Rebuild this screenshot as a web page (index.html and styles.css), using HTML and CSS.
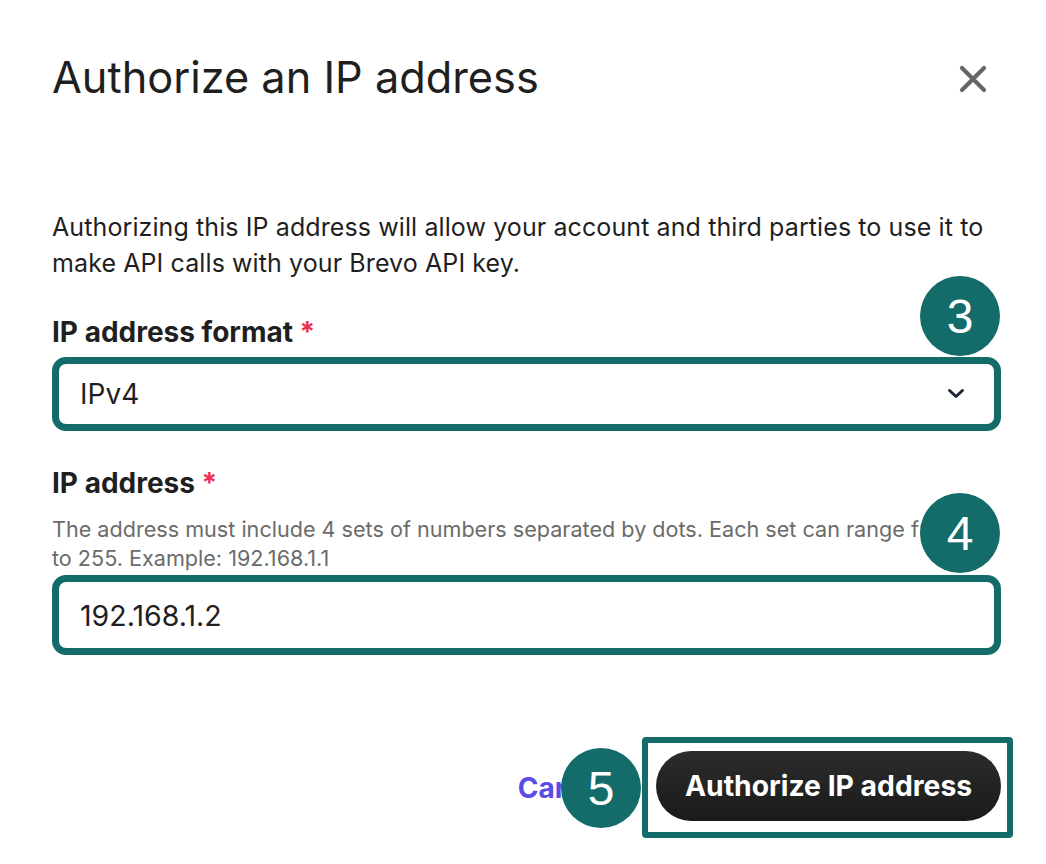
FILE: index.html
```html
<!DOCTYPE html>
<html lang="en">
<head>
<meta charset="utf-8">
<title>Authorize an IP address</title>
<link rel="stylesheet" href="styles.css">
</head>
<body>
<div class="dialog">
  <header class="head">
    <h1 class="title">Authorize an IP address</h1>
    <button class="close" aria-label="Close">
      <svg width="28" height="28" viewBox="0 0 28 28"><path d="M3 3L25 25M25 3L3 25" stroke="#666666" stroke-width="4.2" stroke-linecap="round" fill="none"/></svg>
    </button>
  </header>
  <p class="desc">Authorizing this IP address will allow your account and third parties to use it to make API calls with your Brevo API key.</p>
  <div class="field first">
    <label class="label">IP address format <span class="req">*</span></label>
    <div class="select">
      <span>IPv4</span>
      <svg width="18" height="12" viewBox="0 0 18 12"><path d="M2.5 2.5L9 8.5L15.5 2.5" stroke="#1e2633" stroke-width="3" stroke-linecap="round" stroke-linejoin="round" fill="none"/></svg>
    </div>
  </div>
  <div class="field second">
    <label class="label">IP address <span class="req">*</span></label>
    <p class="help">The address must include 4 sets of numbers separated by dots. Each set can range from 0 to 255. Example: 192.168.1.1</p>
    <div class="input">192.168.1.2</div>
  </div>
  <footer class="foot">
    <a class="cancel">Cancel</a>
    <div class="hl">
      <button class="primary">Authorize IP address</button>
    </div>
  </footer>
  <span class="badge b3">3</span>
  <span class="badge b4">4</span>
  <span class="badge b5">5</span>
</div>
</body>
</html>
```
FILE: styles.css
```css
html, body {
  margin: 0;
  background: #ffffff;
}
body {
  font-family: Inter, "Noto Sans", sans-serif;
  color: #1f1f1f;
}
.dialog {
  position: relative;
  padding: 50px 45px 0 52px;
  height: 864px;
  box-sizing: border-box;
}
.head {
  display: flex;
  justify-content: space-between;
  align-items: center;
  height: 54px;
}
.title {
  margin: 0;
  font-size: 43.3px;
  line-height: 54px;
  font-weight: 400;
  color: #1f1f1f;
}
.close {
  border: 0;
  background: none;
  padding: 0;
  width: 28px;
  height: 28px;
  margin: 4px 14px 0 0;
  display: flex;
}
.desc {
  margin: 105px 0 0;
  font-size: 25px;
  line-height: 36px;
  letter-spacing: 0.1px;
  color: #1f1f1f;
}
.label {
  display: block;
  font-size: 28px;
  line-height: 36px;
  font-weight: 700;
  color: #1f1f1f;
}
.req {
  color: #ee2f4f;
}
.field.first { margin-top: 33px; }
.field.second { margin-top: 34px; }
.select {
  margin-top: 7px;
  height: 74px;
  box-sizing: border-box;
  border: 7px solid #146c6a;
  border-radius: 14px;
  display: flex;
  align-items: center;
  justify-content: space-between;
  padding: 0 29px 0 21px;
  font-size: 28px;
}
.help {
  margin: 14px 0 0;
  font-size: 21.6px;
  line-height: 29px;
  color: #6b6b6b;
}
.input {
  margin-top: 2px;
  height: 80px;
  box-sizing: border-box;
  border: 7px solid #146c6a;
  border-radius: 14px;
  display: flex;
  align-items: center;
  padding: 0 21px;
  font-size: 28.5px;
}
.foot {
  display: flex;
  justify-content: flex-end;
  align-items: center;
  margin-top: 82px;
  margin-right: -12px;
  gap: 29px;
}
.cancel {
  font-size: 28px;
  font-weight: 700;
  color: #5b4ce8;
}
.hl {
  border: 6px solid #146c6a;
  border-radius: 4px;
  padding: 8px 6px 11px 8px;
  display: flex;
}
.primary {
  width: 345px;
  height: 70px;
  border: 0;
  border-radius: 35px;
  background: linear-gradient(#2c2c2c, #1a1a1a);
  color: #ffffff;
  font-family: Inter, "Noto Sans", sans-serif;
  font-size: 28.3px;
  font-weight: 700;
  padding: 0;
}
.badge {
  position: absolute;
  width: 80px;
  height: 80px;
  border-radius: 50%;
  background: #146c6a;
  color: #ffffff;
  font-family: "Liberation Sans", Arial, sans-serif;
  font-size: 48px;
  display: flex;
  align-items: center;
  justify-content: center;
}
.b3 { left: 920px; top: 276px; }
.b4 { left: 920px; top: 493px; }
.b5 { left: 561px; top: 748px; }
```
